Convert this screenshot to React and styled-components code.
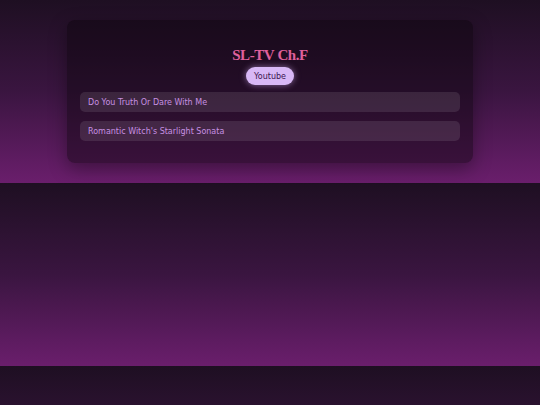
import React from 'react';
import styled, { createGlobalStyle } from 'styled-components';

const GlobalStyle = createGlobalStyle`
  html {
    background-color: #1e0f22;
    background-image: linear-gradient(180deg, #1e0f22 0%, #3a1540 50%, #6a1e6c 100%);
    background-size: 100% 183px;
    background-repeat: repeat-y;
  }
  body {
    margin: 0;
    font-family: "DejaVu Sans", "Open Sans", sans-serif;
  }
`;

const Page = styled.main`
  padding: 20px 0 21px;
  display: flex;
  justify-content: center;
`;

const Card = styled.section`
  width: 380px;
  padding: 25px 13px 22px;
  border-radius: 8px;
  background: rgba(10, 4, 12, 0.45);
  box-shadow: 0 6px 18px rgba(0, 0, 0, 0.35);
  display: flex;
  flex-direction: column;
  align-items: center;
`;

const Title = styled.h1`
  margin: 0;
  font-family: "Liberation Serif", "DejaVu Serif", serif;
  font-weight: 700;
  font-size: 15px;
  line-height: 21px;
  letter-spacing: -0.4px;
  color: #e0609c;
`;

const Pill = styled.button`
  margin-top: 1px;
  height: 18px;
  padding: 0 8px;
  border: none;
  border-radius: 9px;
  background: #d8b8f6;
  color: #3a1450;
  font-family: inherit;
  font-size: 8px;
  box-shadow: 0 0 6px rgba(220, 180, 255, 0.55);
`;

const List = styled.ul`
  list-style: none;
  margin: 7px 0 0;
  padding: 0;
  width: 100%;
  display: flex;
  flex-direction: column;
  gap: 9px;
`;

const Item = styled.li`
  height: 20px;
  padding: 0 8px;
  display: flex;
  align-items: center;
  border-radius: 5px;
  background: rgba(255, 255, 255, 0.1);
  color: #c690e2;
  font-size: 8px;
`;

const videos = ['Do You Truth Or Dare With Me', "Romantic Witch's Starlight Sonata"];

export default function App() {
  return (
    <>
      <GlobalStyle />
      <Page>
        <Card>
          <Title>SL-TV Ch.F</Title>
          <Pill>Youtube</Pill>
          <List>
            {videos.map((v) => (
              <Item key={v}>{v}</Item>
            ))}
          </List>
        </Card>
      </Page>
    </>
  );
}
